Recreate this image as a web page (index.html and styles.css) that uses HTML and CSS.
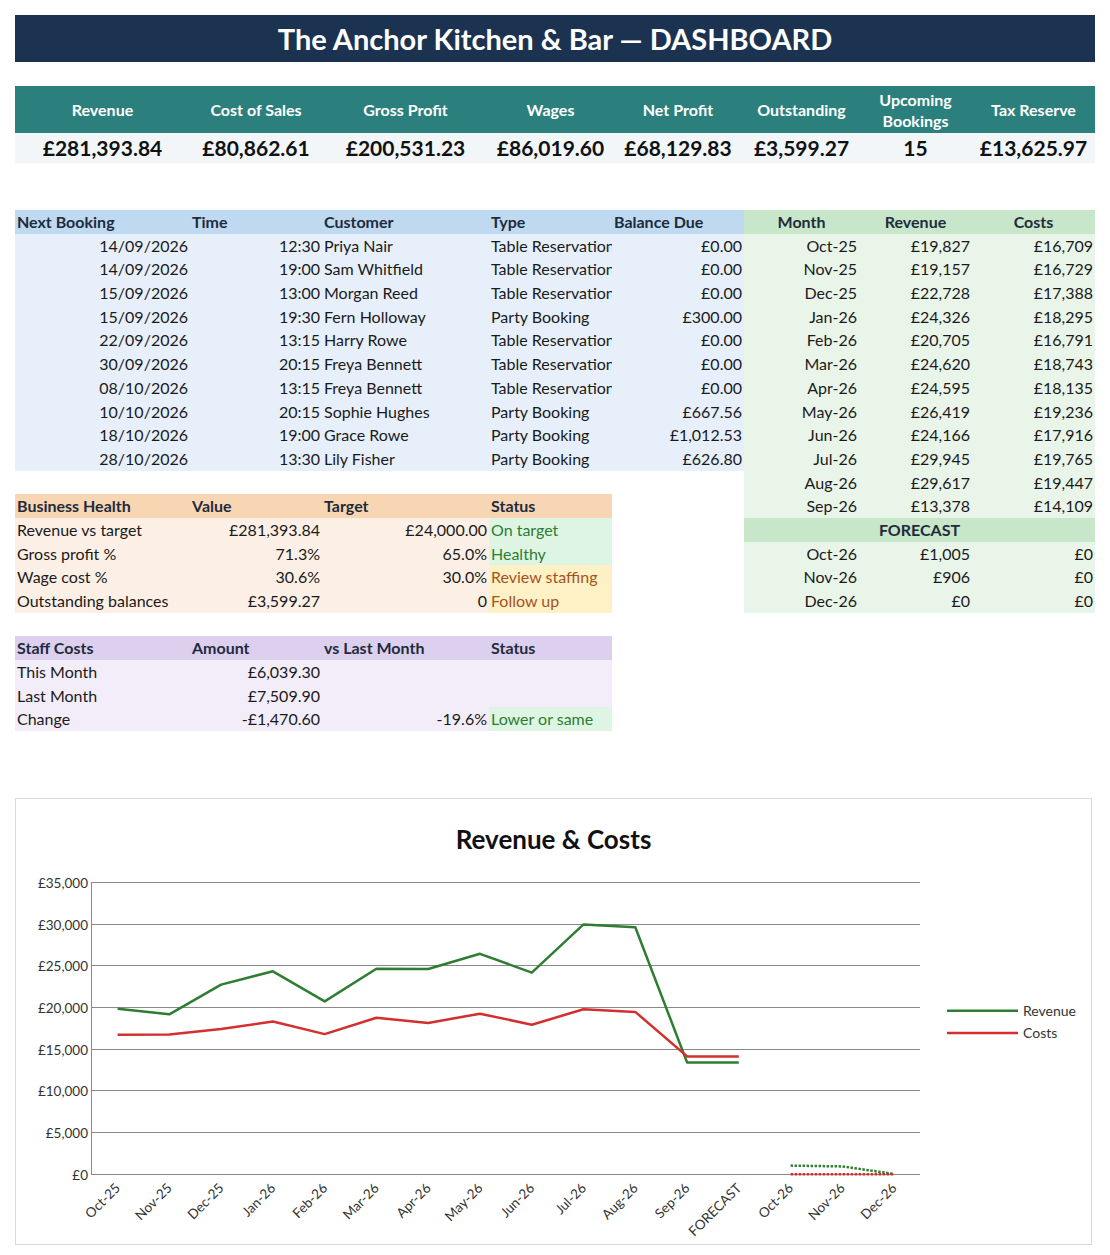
FILE: index.html
```html
<!DOCTYPE html>
<html lang="en">
<head>
<meta charset="utf-8">
<title>The Anchor Kitchen &amp; Bar — Dashboard</title>
<link rel="stylesheet" href="styles.css">
</head>
<body>
<div class="page">
  <header class="title-bar">The Anchor Kitchen &amp; Bar — DASHBOARD</header>

  <section class="kpi">
    <div class="kpi-h">Revenue</div>
    <div class="kpi-h">Cost of Sales</div>
    <div class="kpi-h">Gross Profit</div>
    <div class="kpi-h">Wages</div>
    <div class="kpi-h">Net Profit</div>
    <div class="kpi-h">Outstanding</div>
    <div class="kpi-h">Upcoming<br>Bookings</div>
    <div class="kpi-h">Tax Reserve</div>
    <div class="kpi-v">£281,393.84</div>
    <div class="kpi-v">£80,862.61</div>
    <div class="kpi-v">£200,531.23</div>
    <div class="kpi-v">£86,019.60</div>
    <div class="kpi-v">£68,129.83</div>
    <div class="kpi-v">£3,599.27</div>
    <div class="kpi-v">15</div>
    <div class="kpi-v">£13,625.97</div>
  </section>

  <section class="middle">
    <div class="left">
      <div class="tbl bookings">
        <div class="hd">Next Booking</div><div class="hd">Time</div><div class="hd">Customer</div><div class="hd">Type</div><div class="hd">Balance Due</div>
        <div class="r">14/09/2026</div><div class="r">12:30</div><div>Priya Nair</div><div>Table Reservation</div><div class="r">£0.00</div>
        <div class="r">14/09/2026</div><div class="r">19:00</div><div>Sam Whitfield</div><div>Table Reservation</div><div class="r">£0.00</div>
        <div class="r">15/09/2026</div><div class="r">13:00</div><div>Morgan Reed</div><div>Table Reservation</div><div class="r">£0.00</div>
        <div class="r">15/09/2026</div><div class="r">19:30</div><div>Fern Holloway</div><div>Party Booking</div><div class="r">£300.00</div>
        <div class="r">22/09/2026</div><div class="r">13:15</div><div>Harry Rowe</div><div>Table Reservation</div><div class="r">£0.00</div>
        <div class="r">30/09/2026</div><div class="r">20:15</div><div>Freya Bennett</div><div>Table Reservation</div><div class="r">£0.00</div>
        <div class="r">08/10/2026</div><div class="r">13:15</div><div>Freya Bennett</div><div>Table Reservation</div><div class="r">£0.00</div>
        <div class="r">10/10/2026</div><div class="r">20:15</div><div>Sophie Hughes</div><div>Party Booking</div><div class="r">£667.56</div>
        <div class="r">18/10/2026</div><div class="r">19:00</div><div>Grace Rowe</div><div>Party Booking</div><div class="r">£1,012.53</div>
        <div class="r">28/10/2026</div><div class="r">13:30</div><div>Lily Fisher</div><div>Party Booking</div><div class="r">£626.80</div>
      </div>

      <div class="tbl health">
        <div class="hd">Business Health</div><div class="hd">Value</div><div class="hd">Target</div><div class="hd">Status</div>
        <div>Revenue vs target</div><div class="r">£281,393.84</div><div class="r">£24,000.00</div><div class="st good">On target</div>
        <div>Gross profit %</div><div class="r">71.3%</div><div class="r">65.0%</div><div class="st good">Healthy</div>
        <div>Wage cost %</div><div class="r">30.6%</div><div class="r">30.0%</div><div class="st warn">Review staffing</div>
        <div>Outstanding balances</div><div class="r">£3,599.27</div><div class="r">0</div><div class="st warn">Follow up</div>
      </div>

      <div class="tbl staff">
        <div class="hd">Staff Costs</div><div class="hd">Amount</div><div class="hd">vs Last Month</div><div class="hd">Status</div>
        <div>This Month</div><div class="r">£6,039.30</div><div></div><div></div>
        <div>Last Month</div><div class="r">£7,509.90</div><div></div><div></div>
        <div>Change</div><div class="r">-£1,470.60</div><div class="r">-19.6%</div><div class="st good">Lower or same</div>
      </div>
    </div>

    <div class="tbl months">
      <div class="hd c">Month</div><div class="hd c">Revenue</div><div class="hd c">Costs</div>
      <div class="r">Oct-25</div><div class="r">£19,827</div><div class="r">£16,709</div>
      <div class="r">Nov-25</div><div class="r">£19,157</div><div class="r">£16,729</div>
      <div class="r">Dec-25</div><div class="r">£22,728</div><div class="r">£17,388</div>
      <div class="r">Jan-26</div><div class="r">£24,326</div><div class="r">£18,295</div>
      <div class="r">Feb-26</div><div class="r">£20,705</div><div class="r">£16,791</div>
      <div class="r">Mar-26</div><div class="r">£24,620</div><div class="r">£18,743</div>
      <div class="r">Apr-26</div><div class="r">£24,595</div><div class="r">£18,135</div>
      <div class="r">May-26</div><div class="r">£26,419</div><div class="r">£19,236</div>
      <div class="r">Jun-26</div><div class="r">£24,166</div><div class="r">£17,916</div>
      <div class="r">Jul-26</div><div class="r">£29,945</div><div class="r">£19,765</div>
      <div class="r">Aug-26</div><div class="r">£29,617</div><div class="r">£19,447</div>
      <div class="r">Sep-26</div><div class="r">£13,378</div><div class="r">£14,109</div>
      <div class="hd c span3">FORECAST</div>
      <div class="r">Oct-26</div><div class="r">£1,005</div><div class="r">£0</div>
      <div class="r">Nov-26</div><div class="r">£906</div><div class="r">£0</div>
      <div class="r">Dec-26</div><div class="r">£0</div><div class="r">£0</div>
    </div>
  </section>

  <section class="chart">
    <svg class="chart-svg" width="1075" height="445" viewBox="16 800 1075 445" xmlns="http://www.w3.org/2000/svg">
      <text class="ch-title" x="553.5" y="849.5" text-anchor="middle">Revenue &amp; Costs</text>

      <g class="grid">
        <line x1="91.7" y1="883.5" x2="920" y2="883.5"/>
        <line x1="91.7" y1="925.5" x2="920" y2="925.5"/>
        <line x1="91.7" y1="966.5" x2="920" y2="966.5"/>
        <line x1="91.7" y1="1008.5" x2="920" y2="1008.5"/>
        <line x1="91.7" y1="1050.5" x2="920" y2="1050.5"/>
        <line x1="91.7" y1="1091.5" x2="920" y2="1091.5"/>
        <line x1="91.7" y1="1133.5" x2="920" y2="1133.5"/>
        <line x1="91.7" y1="1175.5" x2="920" y2="1175.5"/>
        <line x1="91.5" y1="883" x2="91.5" y2="1176"/>
      </g>

      <g class="ylab" text-anchor="end">
        <text x="88" y="888.5">£35,000</text>
        <text x="88" y="930.5">£30,000</text>
        <text x="88" y="971.5">£25,000</text>
        <text x="88" y="1013.5">£20,000</text>
        <text x="88" y="1055.5">£15,000</text>
        <text x="88" y="1096.5">£10,000</text>
        <text x="88" y="1138.5">£5,000</text>
        <text x="88" y="1180.5">£0</text>
      </g>

      <g class="xlab" text-anchor="end">
        <text transform="translate(121,1190) rotate(-45)">Oct-25</text>
        <text transform="translate(172.8,1190) rotate(-45)">Nov-25</text>
        <text transform="translate(224.6,1190) rotate(-45)">Dec-25</text>
        <text transform="translate(276.4,1190) rotate(-45)">Jan-26</text>
        <text transform="translate(328.2,1190) rotate(-45)">Feb-26</text>
        <text transform="translate(379.9,1190) rotate(-45)">Mar-26</text>
        <text transform="translate(431.7,1190) rotate(-45)">Apr-26</text>
        <text transform="translate(483.5,1190) rotate(-45)">May-26</text>
        <text transform="translate(535.3,1190) rotate(-45)">Jun-26</text>
        <text transform="translate(587,1190) rotate(-45)">Jul-26</text>
        <text transform="translate(638.8,1190) rotate(-45)">Aug-26</text>
        <text transform="translate(690.6,1190) rotate(-45)">Sep-26</text>
        <text transform="translate(742.3,1190) rotate(-45)">FORECAST</text>
        <text transform="translate(794.1,1190) rotate(-45)">Oct-26</text>
        <text transform="translate(845.9,1190) rotate(-45)">Nov-26</text>
        <text transform="translate(897.6,1190) rotate(-45)">Dec-26</text>
      </g>

      <polyline class="ln rev" points="117.6,1009.8 169.3,1015.3 221.1,985.6 272.9,972.3 324.7,1002.4 376.4,969.8 428.2,970.0 480.0,954.8 531.8,973.6 583.5,925.4 635.3,928.2 687.1,1063.5 738.8,1063.5"/>
      <polyline class="ln cost" points="117.6,1035.7 169.3,1035.6 221.1,1030.1 272.9,1022.5 324.7,1035.1 376.4,1018.8 428.2,1023.9 480.0,1014.7 531.8,1025.7 583.5,1010.3 635.3,1012.9 687.1,1057.4 738.8,1057.4"/>
      <polyline class="ln rev dot" points="790.6,1166.6 842.4,1167.4 894.1,1175"/>
      <polyline class="ln cost dot" points="790.6,1175.2 842.4,1175.2 894.1,1175.2"/>

      <line class="ln rev" x1="947" y1="1011.7" x2="1018" y2="1011.7"/>
      <line class="ln cost" x1="947" y1="1034" x2="1018" y2="1034"/>
      <text class="leg" x="1023" y="1016.5">Revenue</text>
      <text class="leg" x="1023" y="1039">Costs</text>
    </svg>
  </section>
</div>
</body>
</html>
```

FILE: styles.css
```css
* { box-sizing: border-box; }

html, body {
  margin: 0;
  padding: 0;
  background: #ffffff;
}

body {
  font-family: Lato, "Open Sans", "Liberation Sans", sans-serif;
  font-size: 16px;
  color: #1a1a1a;
}

.page {
  width: 1110px;
  padding: 15px 15px 0 15px;
}

.title-bar {
  height: 47px;
  width: 1080px;
  background: #1b3350;
  color: #ffffff;
  font-weight: 700;
  font-size: 29px;
  display: flex;
  align-items: center;
  justify-content: center;
}

.kpi {
  margin-top: 24px;
  width: 1080px;
  display: grid;
  grid-template-columns: 175px 132px 167px 123px 132px 115px 113px 123px;
  grid-template-rows: 47px 30px;
}

.kpi-h {
  background: #2b7f7d;
  color: #ffffff;
  font-weight: 700;
  font-size: 16px;
  line-height: 21px;
  display: flex;
  align-items: center;
  justify-content: center;
  text-align: center;
}

.kpi-v {
  background: #f2f6f9;
  color: #111111;
  font-weight: 700;
  font-size: 21px;
  display: flex;
  align-items: center;
  justify-content: center;
  white-space: nowrap;
  padding-bottom: 1px;
}

.middle {
  margin-top: 47px;
  display: flex;
  align-items: flex-start;
}

.left {
  width: 729px;
  display: flex;
  flex-direction: column;
  align-items: flex-start;
}

.tbl {
  display: grid;
  grid-auto-rows: 23.7px;
}

.tbl > div {
  padding: 0 2px;
  line-height: 23px;
  white-space: nowrap;
  overflow: hidden;
}

.tbl .hd {
  font-weight: 700;
  color: #1e2b3c;
}

.tbl .r { text-align: right; }
.tbl .c { text-align: center; }
.tbl .span3 { grid-column: 1 / span 3; }

.bookings {
  width: 729px;
  grid-template-columns: 175px 132px 167px 123px 132px;
  background: #e7f0fa;
}
.bookings .hd { background: #bfd9f0; }

.health {
  margin-top: 23.7px;
  width: 597px;
  grid-template-columns: 175px 132px 167px 123px;
  background: #fcf0e6;
}
.health .hd { background: #f8d6b4; }

.staff {
  margin-top: 23.7px;
  width: 597px;
  grid-template-columns: 175px 132px 167px 123px;
  background: #f2edf9;
}
.staff .hd { background: #ddd0ef; }

.tbl .st.good { background: #dff5e4; color: #2e7d32; }
.tbl .st.warn { background: #fff1c6; color: #a4531c; }

.months {
  width: 351px;
  grid-template-columns: 115px 113px 123px;
  background: #eaf5ea;
}
.months .hd { background: #c8e6c9; }

.chart {
  margin-top: 67px;
  width: 1077px;
  height: 447px;
  border: 1px solid #d9d9d9;
}

.chart-svg {
  display: block;
  font-family: Lato, "Open Sans", "Liberation Sans", sans-serif;
}

.ch-title {
  font-size: 26px;
  font-weight: 700;
  fill: #111111;
}

.grid line {
  stroke: #8a8a8a;
  stroke-width: 1;
}

.ylab text, .xlab text {
  font-size: 13.5px;
  fill: #333333;
}

.leg {
  font-size: 14px;
  fill: #333333;
}

.ln {
  fill: none;
  stroke-width: 2.5;
  stroke-linejoin: round;
}
.ln.rev { stroke: #2e7d32; }
.ln.cost { stroke: #d32f2f; }
.ln.dot { stroke-dasharray: 2.5 1.5; stroke-linejoin: miter; }
```
